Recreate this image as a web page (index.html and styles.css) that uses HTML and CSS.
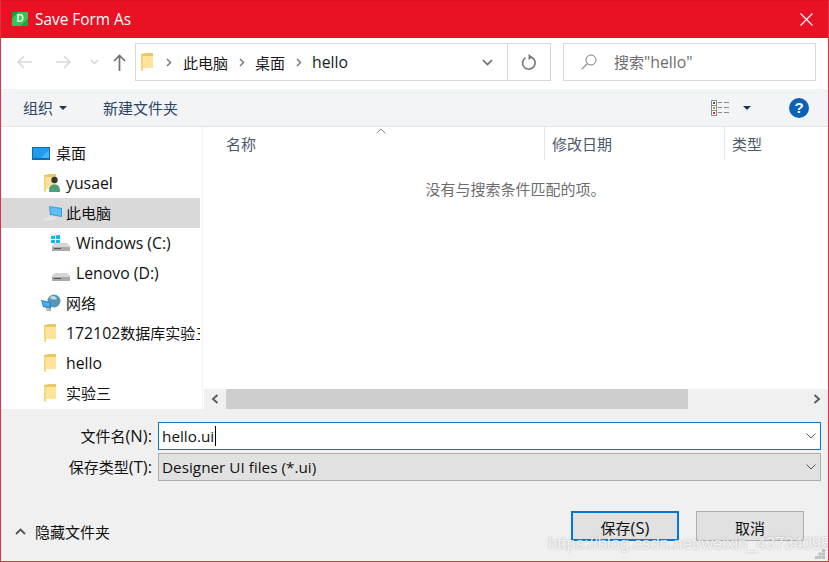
FILE: index.html
```html
<!DOCTYPE html>
<html lang="zh-CN">
<head>
<meta charset="utf-8">
<title>Save Form As</title>
<link rel="stylesheet" href="styles.css">
</head>
<body>
<svg class="defs" width="0" height="0" aria-hidden="true">
  <symbol id="folder" viewBox="0 0 12 18">
    <path d="M0 1 L6 0 L12 0 L12 15 L2 15 L2 18 L0 17 Z" fill="#e9c766"/>
    <path d="M2 3 H12 V15 H2 Z" fill="#fde49a"/>
    <path d="M0 1 L2 3 V18 L0 17 Z" fill="#f6d77f"/>
  </symbol>
  <symbol id="drive" viewBox="0 0 18 8">
    <path d="M3 0 H15 L18 3 V8 H0 V3 Z" fill="#d5d5d5"/>
    <path d="M0 4 H18 V8 H0 Z" fill="#a9a9a9"/>
    <path d="M2 5 H9 V6 H2 Z" fill="#555"/>
  </symbol>
</svg>
<div class="window">
  <header class="titlebar">
    <span class="app-icon">D</span>
    <span class="title">Save Form As</span>
    <svg class="close" width="13" height="13" viewBox="0 0 13 13"><path d="M.5 .5 L12.500 12.500 M12.500 .5 L.5 12.500" stroke="#fff" stroke-width="1.2" fill="none"/></svg>
  </header>

  <nav class="navbar">
    <svg class="nav-back" width="16" height="14" viewBox="0 0 16 14"><path d="M1 7 H15 M7 1 L1 7 L7 13" stroke="#d9d9d9" stroke-width="1.6" fill="none"/></svg>
    <svg class="nav-forward" width="16" height="14" viewBox="0 0 16 14"><path d="M0 7 H14 M8 1 L14 7 L8 13" stroke="#d9d9d9" stroke-width="1.6" fill="none"/></svg>
    <svg class="nav-down" width="9" height="6" viewBox="0 0 9 6"><path d="M1 1 L4.5 4.5 L8 1" stroke="#d4d4d4" stroke-width="1.5" fill="none"/></svg>
    <svg class="nav-up" width="13" height="17" viewBox="0 0 13 17"><path d="M6.5 17 V1.5 M1 7 L6.5 1.5 L12 7" stroke="#6f6f6f" stroke-width="1.7" fill="none"/></svg>
    <div class="address">
      <svg class="addr-folder" width="12" height="18"><use href="#folder"/></svg>
      <svg class="crumb-sep first" width="6" height="9" viewBox="0 0 6 9"><path d="M1 1 L4.5 4.5 L1 8" stroke="#7a7a7a" stroke-width="1.5" fill="none"/></svg>
      <span class="crumb">此电脑</span>
      <svg class="crumb-sep" width="6" height="9" viewBox="0 0 6 9"><path d="M1 1 L4.5 4.5 L1 8" stroke="#7a7a7a" stroke-width="1.5" fill="none"/></svg>
      <span class="crumb">桌面</span>
      <svg class="crumb-sep" width="6" height="9" viewBox="0 0 6 9"><path d="M1 1 L4.5 4.5 L1 8" stroke="#7a7a7a" stroke-width="1.5" fill="none"/></svg>
      <span class="crumb lat">hello</span>
      <svg class="addr-chevron" width="11" height="7" viewBox="0 0 11 7"><path d="M1 1 L5.5 5.500 L10 1" stroke="#6d6d6d" stroke-width="1.7" fill="none"/></svg>
      <div class="refresh">
        <svg width="16" height="17" viewBox="0 0 16 17"><path d="M10.5 3.2 A6.3 6.3 0 1 1 4.5 3.6" stroke="#7a7a7a" stroke-width="1.7" fill="none"/><path d="M7.5 0 L12 3.2 L7.5 6 Z" fill="#7a7a7a"/></svg>
      </div>
    </div>
    <div class="search">
      <svg width="16" height="16" viewBox="0 0 16 16"><circle cx="10" cy="6" r="5" stroke="#7f7f7f" stroke-width="1" fill="none"/><path d="M6.5 9.5 L0.8 15.2" stroke="#8a8a8a" stroke-width="1.2"/></svg>
      <span class="search-text">搜索<span class="lat">"hello"</span></span>
    </div>
  </nav>

  <div class="toolbar">
    <span class="tool">组织</span>
    <span class="tool-caret"></span>
    <span class="tool new-folder">新建文件夹</span>
    <svg class="view-icon" width="18" height="16" viewBox="0 0 18 16">
      <path d="M.5.5h5v5h-5zM.5 5.5h5v5h-5zM.5 10.5h5v5h-5z" fill="#fff" stroke="#8a8a8a"/>
      <path d="M2 2h2v2H2z" fill="#3a5a8a"/><path d="M2 7h2v2H2z" fill="#a39a20"/><path d="M2 12h2v2H2z" fill="#c0392b"/>
      <path d="M7 2.5h4M13 2.5h5M7 7.5h4M13 7.5h5M7 12.5h4M13 12.5h5" stroke="#8a8a8a"/>
    </svg>
    <span class="tool-caret view-caret"></span>
    <span class="help">?</span>
  </div>

  <main class="main">
    <aside class="sidebar">
      <ul class="tree">
        <li class="item depth0">
          <span class="ico"><svg width="18" height="13" viewBox="0 0 18 13"><rect width="18" height="13" fill="#0c6fb3"/><rect x="1" y="1" width="16" height="10" fill="#1f9cf0"/><path d="M9 11 L17 3 V11 Z" fill="#4db5f5"/></svg></span><span>桌面</span>
        </li>
        <li class="item depth1">
          <span class="ico"><svg width="16" height="18" viewBox="0 0 16 18"><use href="#folder" width="12" height="18"/><circle cx="10.5" cy="6" r="3.2" fill="#3b3430"/><path d="M5 18 C5 12 7 10.5 10.5 10.5 S16 12 16 18 Z" fill="#4f9e7a"/></svg></span><span class="lat">yusael</span>
        </li>
        <li class="item depth1 selected">
          <span class="ico"><svg class="pc" width="20" height="16" viewBox="0 0 20 16"><path d="M0 15 L8 11 L16 13 L9 16 Z" fill="#e4e4e4"/><path d="M7 1 L20 3 V12 L8 10 Z" fill="#2f9fe0"/><path d="M8 2 L19 4 V11 L9 9 Z" fill="#5fbdf2"/></svg></span><span>此电脑</span>
        </li>
        <li class="item depth2">
          <span class="ico"><svg width="20" height="16" viewBox="0 0 20 16"><path d="M0 1 L4 .5 V4 H0 Z M5 .3 L9 0 V4 H5 Z M0 5 H4 V8.5 L0 8 Z M5 5 H9 V9 L5 8.600 Z" fill="#14b5f0"/><use href="#drive" x="1" y="8" width="18" height="8"/></svg></span><span class="lat">Windows (C:)</span>
        </li>
        <li class="item depth2">
          <span class="ico"><svg width="20" height="16" viewBox="0 0 20 16"><use href="#drive" x="1" y="8" width="18" height="8"/></svg></span><span class="lat">Lenovo (D:)</span>
        </li>
        <li class="item depth0b">
          <span class="ico"><svg width="20" height="18" viewBox="0 0 20 18"><circle cx="13" cy="7" r="6.5" fill="#5b93b5"/><path d="M9 3 C12 1 15 2 16 5 C13 6 10 6 9 3 Z" fill="#b9dcec"/><path d="M0 6 L10 8 V15 L2 13 Z" fill="#2d86c8"/><path d="M1.5 7.5 L8.5 9 V13 L3 11.8 Z" fill="#4fb0ec"/><path d="M5 14 L10 15 V17.5 L5 16.5 Z" fill="#b5b5b5"/></svg></span><span>网络</span>
        </li>
        <li class="item depth1">
          <span class="ico"><svg width="12" height="18"><use href="#folder"/></svg></span><span><span class="lat">172102</span>数据库实验三</span>
        </li>
        <li class="item depth1">
          <span class="ico"><svg width="12" height="18"><use href="#folder"/></svg></span><span class="lat">hello</span>
        </li>
        <li class="item depth1">
          <span class="ico"><svg width="12" height="18"><use href="#folder"/></svg></span><span>实验三</span>
        </li>
      </ul>
    </aside>
    <section class="content">
      <div class="columns">
        <div class="col col-name">名称<svg class="sort" width="10" height="6" viewBox="0 0 10 6"><path d="M.5 5.5 L5 1 L9.5 5.5" stroke="#8a8a8a" fill="none"/></svg></div>
        <div class="col col-date">修改日期</div>
        <div class="col col-type">类型</div>
      </div>
      <div class="empty">没有与搜索条件匹配的项。</div>
      <div class="hscroll">
        <span class="arrow"><svg width="8" height="10" viewBox="0 0 8 10"><path d="M6.5 1 L2 5 L6.5 9" stroke="#606060" stroke-width="2" fill="none"/></svg></span>
        <span class="track"><span class="thumb"></span></span>
        <span class="arrow"><svg width="8" height="10" viewBox="0 0 8 10"><path d="M1.5 1 L6 5 L1.5 9" stroke="#606060" stroke-width="2" fill="none"/></svg></span>
      </div>
    </section>
  </main>

  <section class="bottom">
    <div class="form-row">
      <label class="label">文件名<span class="lat-wide">(N):</span></label>
      <div class="combo focused"><span class="value">hello.ui</span><span class="text-caret"></span>
        <svg class="combo-chevron" width="10" height="6" viewBox="0 0 10 6"><path d="M.5 .5 L5 5 L9.5 .5" stroke="#555" fill="none"/></svg></div>
    </div>
    <div class="form-row">
      <label class="label">保存类型<span class="lat-wide">(T):</span></label>
      <div class="combo"><span class="value">Designer UI files (*.ui)</span>
        <svg class="combo-chevron" width="10" height="6" viewBox="0 0 10 6"><path d="M.5 .5 L5 5 L9.5 .5" stroke="#555" fill="none"/></svg></div>
    </div>
    <div class="footer">
      <svg class="hide-chevron" width="11" height="7" viewBox="0 0 11 7"><path d="M1 6 L5.5 1.500 L10 6" stroke="#555" stroke-width="1.8" fill="none"/></svg>
      <span class="hide-text">隐藏文件夹</span>
      <button class="btn primary">保存<span class="lat-wide">(S)</span></button>
      <button class="btn">取消</button>
    </div>
  </section>

  <div class="watermark">https://blog.csdn.net/weixin_43734095</div>
  <svg class="grip" width="10" height="10" viewBox="0 0 10 10"><path d="M7 0h3v3H7zM3.500 3.500h3v3h-3zM7 3.500h3v3H7zM0 7h3v3H0zM3.500 7h3v3h-3zM7 7h3v3H7z" fill="#bdbdbd"/></svg>
</div>
</body>
</html>
```

FILE: styles.css
```css
* { box-sizing: border-box; }
html, body { margin: 0; padding: 0; }
body {
  font-family: "Open Sans", "Noto Sans CJK SC", sans-serif;
  font-size: 15px;
  color: #111;
  overflow: hidden;
}
.lat { font-size: 15.8px; }
.lat-wide { font-size: 16.5px; }
.defs { position: absolute; }
.window {
  position: relative;
  width: 829px;
  height: 562px;
  border: 1px solid #e63042;
  border-top-color: #dd1020;
  display: flex;
  flex-direction: column;
  background: #fff;
  overflow: hidden;
}

/* Title bar */
.titlebar {
  height: 37px;
  flex: none;
  background: #e81224;
  color: #fff;
  display: flex;
  align-items: center;
  padding: 0 15px 0 11px;
}
.app-icon {
  width: 16px;
  height: 14px;
  margin-bottom: 1px;
  border-radius: 1px;
  background: linear-gradient(135deg, #1e9e3c 0 20%, #35c457 20% 75%, #20a540 75%);
  color: #e8ffe8;
  font: bold 10px/14px "Liberation Sans", sans-serif;
  text-align: center;
}
.title { margin-left: 7px; font-size: 15.4px; line-height: 37px; }
.close { margin-left: auto; margin-bottom: 1px; }

/* Navigation row */
.navbar {
  height: 51px;
  flex: none;
  display: flex;
  align-items: center;
  padding: 0 12px 3px 16px;
}
.nav-forward { margin-left: 23px; }
.nav-down { margin-left: 18px; }
.nav-up { margin: 0 9px 0 14px; }
.address {
  width: 416px;
  height: 38px;
  border: 1px solid #d9d9d9;
  display: flex;
  align-items: center;
  font-size: 15px;
}
.addr-folder { margin-left: 5px; }
.crumb-sep { margin: 0 10px 0 11px; flex: none; }
.crumb-sep.first { margin: 0 11px 0 13px; }
.crumb { color: #1a1a1a; }
.addr-chevron { margin-left: auto; margin-right: 14px; }
.refresh {
  width: 43px;
  height: 100%;
  border-left: 1px solid #d9d9d9;
  display: flex;
  align-items: center;
  justify-content: center;
}
.search {
  width: 253px;
  height: 38px;
  margin-left: 12px;
  border: 1px solid #d9d9d9;
  display: flex;
  align-items: center;
  padding-left: 17px;
  color: #6d6d6d;
  font-size: 15px;
}
.search-text { margin-left: 17px; }

/* Toolbar */
.toolbar {
  height: 38px;
  flex: none;
  background: #f3f4f6;
  border-bottom: 1px solid #e5e5e5;
  display: flex;
  align-items: center;
  padding: 0 19px 0 22px;
  color: #2c4564;
  font-size: 15px;
}
.tool-caret {
  width: 0;
  height: 0;
  margin-left: 6px;
  border-left: 4px solid transparent;
  border-right: 4px solid transparent;
  border-top: 4px solid #1f3556;
}
.new-folder { margin-left: 36px; }
.view-icon { margin-left: auto; }
.view-caret { margin-left: 14px; }
.help {
  width: 20px;
  height: 20px;
  margin-left: 38px;
  border-radius: 50%;
  background: #0a62b8;
  color: #fff;
  font: bold 15px/20px "Liberation Sans", sans-serif;
  text-align: center;
}

/* Main */
.main {
  height: 282px;
  flex: none;
  display: flex;
}
.sidebar {
  width: 202px;
  flex: none;
  border-right: 1px solid #f3f3f3;
  overflow: hidden;
}
.tree {
  list-style: none;
  margin: 0;
  padding: 11px 0 0;
  width: 199px;
}
.item {
  height: 30px;
  line-height: 30px;
  display: flex;
  align-items: center;
  white-space: nowrap;
  overflow: hidden;
  color: #111;
}
.item.selected { background: #d9d9d9; }
.depth0 { padding-left: 31px; }
.depth0b { padding-left: 40px; }
.depth0b .ico { width: 25px; }
.depth1 { padding-left: 43px; }
.depth2 { padding-left: 50px; }
.depth2 .ico { width: 25px; }
.ico {
  width: 22px;
  height: 30px;
  flex: none;
  display: flex;
  align-items: center;
}
.depth0 .ico { width: 24px; }
.selected .ico .pc { margin-left: -2px; }

.content {
  flex: 1;
  min-width: 0;
  display: flex;
  flex-direction: column;
}
.columns {
  height: 33px;
  flex: none;
  display: flex;
  color: #4a5a6c;
  font-size: 15px;
  line-height: 34px;
}
.col { position: relative; padding-left: 7px; border-right: 1px solid #e5e5e5; }
.col-name { width: 342px; padding-left: 23px; }
.col-date { width: 180px; }
.col-type { flex: 1; border-right: 0; }
.sort { position: absolute; left: 173px; top: 1px; }
.empty {
  flex: 1;
  text-align: center;
  color: #6d6d6d;
  font-size: 15px;
  padding-top: 18px;
  line-height: 22px;
}
.hscroll {
  height: 20px;
  flex: none;
  display: flex;
  background: #f0f0f0;
  margin-left: 1px;
}
.arrow {
  width: 22px;
  flex: none;
  display: flex;
  align-items: center;
  justify-content: center;
}
.track { flex: 1; display: block; }
.thumb { display: block; width: 462px; height: 100%; background: #cdcdcd; }

/* Bottom */
.bottom {
  flex: 1;
  background: #f0f0f0;
  padding: 13px 7px 0 0;
}
.form-row {
  display: flex;
  align-items: center;
  height: 28px;
  margin-bottom: 3px;
}
.label {
  width: 151px;
  flex: none;
  text-align: right;
  margin-right: 6px;
  color: #111;
  font-size: 15px;
  padding-bottom: 1px;
}
.combo {
  flex: 1;
  height: 28px;
  border: 1px solid #adadad;
  background: #e1e1e1;
  display: flex;
  align-items: center;
  padding: 0 4px 0 3px;
}
.value { font-size: 15.3px; padding-bottom: 1px; }
.combo.focused { border-color: #0078d7; background: #fff; }
.text-caret { width: 1px; height: 20px; background: #000; margin-left: 1px; }
.combo-chevron { margin-left: auto; }
.footer {
  display: flex;
  align-items: center;
  height: 30px;
  margin-top: 30px;
  padding: 0 17px 0 14px;
}
.hide-chevron { margin-top: 10px; }
.hide-text { margin-left: 9px; margin-top: 11px; font-size: 15px; }
.btn {
  width: 108px;
  height: 30px;
  margin-left: 17px;
  border: 1px solid #adadad;
  background: #e1e1e1;
  font: inherit;
  color: #111;
  padding: 2px 0 0;
}
.btn.primary { margin-left: auto; border: 2px solid #0078d7; }

/* Overlays */
.watermark {
  position: absolute;
  left: 547px;
  top: 532px;
  color: rgba(255, 255, 255, 0.8);
  font: 16.6px/22px "Liberation Sans", sans-serif;
  white-space: nowrap;
  text-shadow: 0 0 2px rgba(140, 140, 140, 0.7);
}
.grip { position: absolute; right: 3px; bottom: 2px; }
```
